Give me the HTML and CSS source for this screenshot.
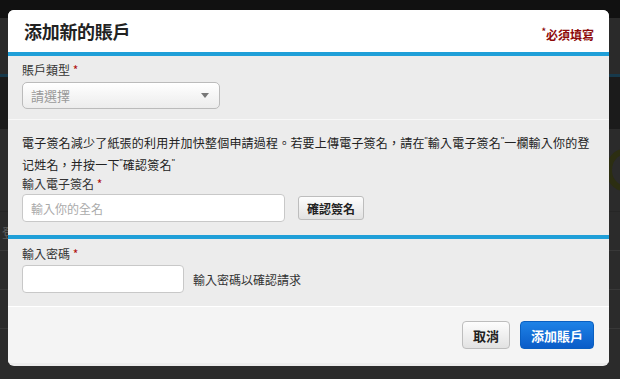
FILE: index.html
```html
<!DOCTYPE html>
<html lang="zh-Hant">
<head>
  <meta charset="UTF-8">
  <meta name="viewport" content="width=device-width, initial-scale=1.0">
  <title>添加新的賬戶</title>
  <link rel="stylesheet" href="styles.css">
</head>
<body>
  <div class="page">
    <div class="page-top"></div>
    <div class="page-nav"></div>
    <div class="page-hero"></div>
    <div class="page-body">
      <div class="page-stat"><span class="stat-ring"></span></div>
      <div class="page-row"><span class="row-text">登入</span></div>
      <div class="page-row"></div>
      <div class="page-row"></div>
    </div>
  </div>

  <div class="modal">
    <div class="modal-head">
      <h1>添加新的賬戶</h1>
      <span class="required"><sup>*</sup>必須填寫</span>
    </div>

    <div class="section first">
      <label class="field-label">賬戶類型 <span class="star">*</span></label>
      <div class="select">
        <span>請選擇</span>
        <span class="caret"></span>
      </div>
    </div>

    <div class="section sign">
      <p class="note">電子簽名減少了紙張的利用并加快整個申請過程。若要上傳電子簽名，請在<span class="qm">"</span>輸入電子簽名<span class="qm">"</span>一欄輸入你的登<br>记姓名，并按一下<span class="qm">"</span>確認簽名<span class="qm">"</span></p>
      <label class="field-label">輸入電子簽名 <span class="star">*</span></label>
      <div class="inline">
        <input type="text" class="input name" placeholder="輸入你的全名">
        <button type="button" class="btn">確認簽名</button>
      </div>
    </div>

    <div class="section pass">
      <label class="field-label">輸入密碼 <span class="star">*</span></label>
      <div class="inline">
        <input type="password" class="input pwd">
        <span class="hint">輸入密碼以確認請求</span>
      </div>
    </div>

    <div class="modal-foot">
      <button type="button" class="btn cancel">取消</button>
      <button type="button" class="btn primary">添加賬戶</button>
    </div>
  </div>
</body>
</html>
```

FILE: styles.css
```css
body { margin: 0; background: #2b2b2b; font-family: "Noto Sans CJK TC", "Noto Sans", sans-serif; color: #333; overflow: hidden; }

/* dimmed page behind the dialog */
.page { height: 379px; }
.page-top { height: 18px; background: #111; }
.page-nav { height: 56px; background: #2a2a2a; border-bottom: 3px solid #17394b; }
.page-hero { height: 52px; background: #1b1b1b; }
.page-body { background: #2b2b2b; }
.page-stat { height: 82px; display: flex; justify-content: flex-end; align-items: center; border-bottom: 1px solid #262626; }
.stat-ring { width: 24px; height: 30px; border: 6px solid #2c2e12; border-radius: 50%; margin-right: -22px; }
.page-row { height: 38px; border-bottom: 1px solid #383838; display: flex; align-items: center; padding-left: 2px; }
.row-text { font-size: 13px; color: #5c5c5c; }

.modal { position: absolute; top: 10px; left: 8px; width: 601px; height: 356px; background: #ececec; border-radius: 6px; overflow: hidden; }

.modal-head { height: 42px; background: #fff; border-bottom: 4px solid #1f9fd8; display: flex; justify-content: space-between; align-items: center; padding: 0 15px 0 16px; }
.modal-head h1 { margin: 0; font-size: 18px; font-weight: bold; color: #222; letter-spacing: -0.3px; }
.required { color: #8e0a0a; font-size: 12px; font-weight: bold; padding-top: 6px; }
.required sup { font-size: 9px; }

.section { padding: 6px 14px 10px; }
.section.first { border-bottom: 1px solid #f8f8f8; }
.section.sign { padding: 12px 14px 13px; }
.section.pass { border-top: 4px solid #1f9fd8; padding: 7px 14px 13px; border-bottom: 1px solid #fff; }

.field-label { display: block; font-size: 12px; line-height: 16px; color: #333; }
.star { color: #b01010; }

.select { margin-top: 4px; border: 1px solid #bbb; border-radius: 5px; background: linear-gradient(#fff, #ececec); display: flex; align-items: center; justify-content: space-between; padding: 0 10px 0 8px; box-sizing: border-box; width: 198px; height: 27px; font-size: 13px; color: #999; box-shadow: inset 0 1px 0 #fff; }
.caret { width: 0; height: 0; border-left: 4px solid transparent; border-right: 4px solid transparent; border-top: 5px solid #777; }

.note { margin: 0; font-size: 12px; line-height: 22px; letter-spacing: 0.2px; color: #222; }
.qm { display: inline-block; vertical-align: top; font-family: "Liberation Sans", sans-serif; font-size: 9px; line-height: 16px; letter-spacing: 0; }

.inline { display: flex; align-items: center; margin-top: 2px; }
.pass .inline { margin-top: 3px; }
.input { height: 28px; box-sizing: border-box; border: 1px solid #c8c8c8; border-radius: 4px; background: #fff; padding: 0 8px; font-family: inherit; font-size: 12px; outline: none; }
.input::placeholder { color: #aaa; }
.input.name { width: 263px; margin-right: 13px; }
.input.pwd { width: 162px; margin-right: 9px; }
.hint { font-size: 12px; color: #333; }

.btn { font-family: inherit; font-size: 12px; font-weight: bold; color: #222; height: 24px; padding: 0 8px; border: 1px solid #bdbdbd; border-radius: 3px; background: linear-gradient(#fdfdfd, #e2e2e2); cursor: pointer; }

.modal-foot { height: 56px; background: #f4f4f4; display: flex; justify-content: flex-end; align-items: center; gap: 10px; padding: 0 15px; box-sizing: border-box; }
.modal-foot .btn { height: 28px; font-size: 13px; padding: 0 10px; border-radius: 4px; }
.btn.cancel { width: 48px; padding: 0; }
.btn.primary { width: 74px; padding: 0; color: #fff; border-color: #0a5fc0; background: linear-gradient(#1e82e6, #0a5cc8); }
```
